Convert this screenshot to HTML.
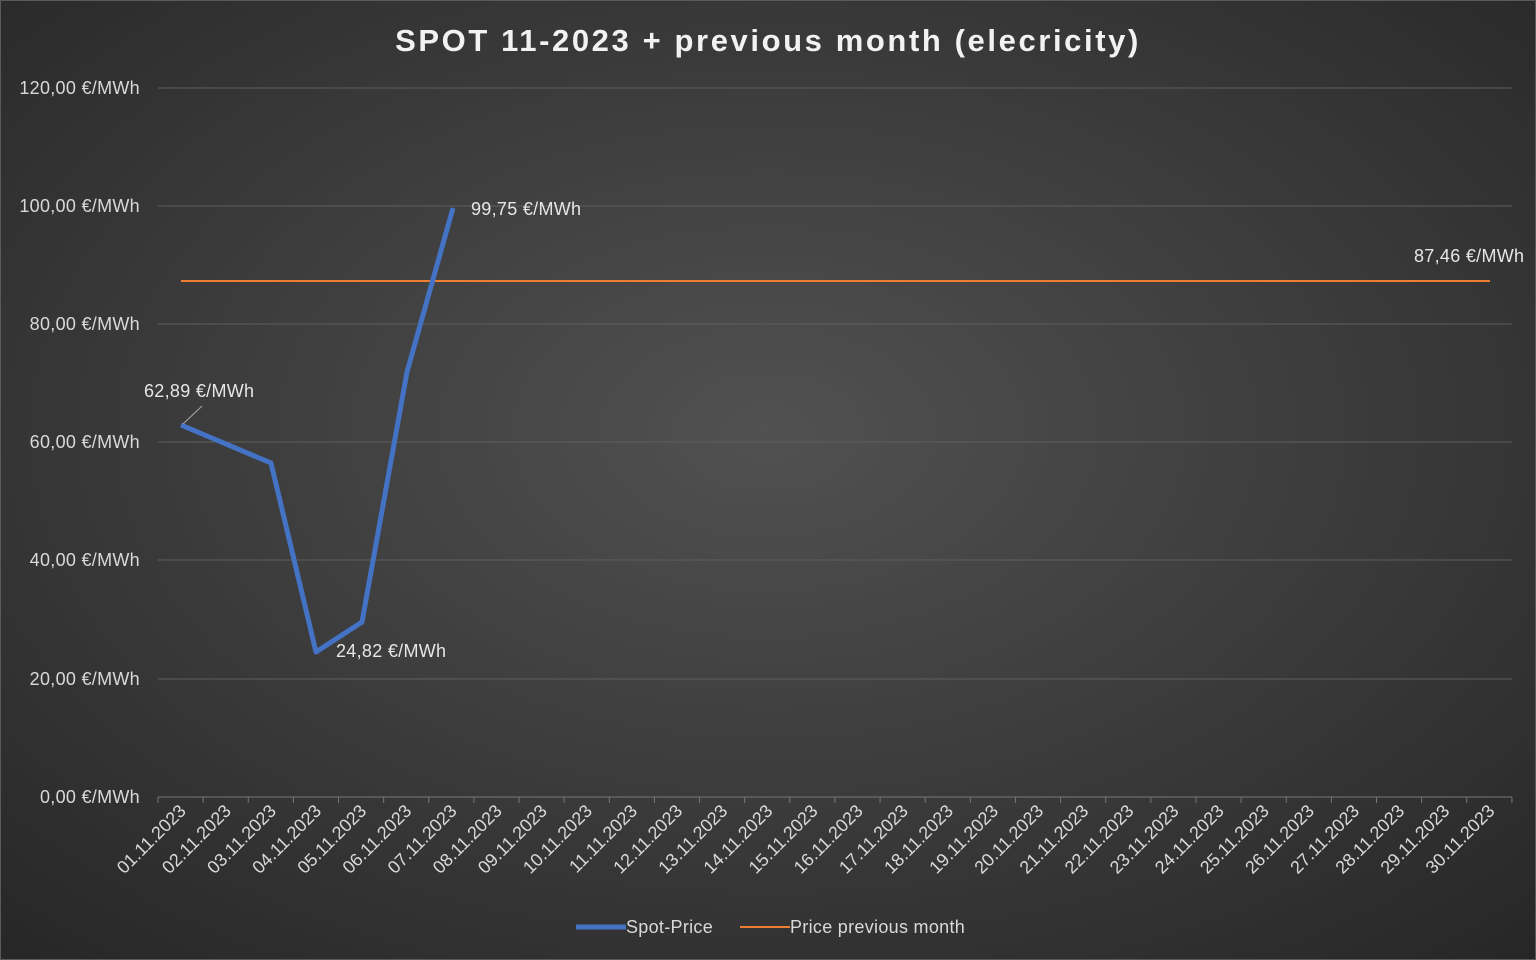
<!DOCTYPE html><html><head><style>html,body{margin:0;width:1536px;height:960px;overflow:hidden;background:#333}svg{display:block}</style></head><body>
<svg width="1536" height="960" xmlns="http://www.w3.org/2000/svg" font-family="Liberation Sans, sans-serif">
<defs><radialGradient id="g" cx="50%" cy="45%" r="75%"><stop offset="0" stop-color="#515151"/><stop offset="1" stop-color="#262626"/></radialGradient></defs>
<rect width="1536" height="960" fill="url(#g)"/>
<rect x="0.5" y="0.5" width="1535" height="959" fill="none" stroke="#5a5a5a"/>
<text x="768" y="51" text-anchor="middle" font-size="31" font-weight="bold" fill="#f2f2f2" letter-spacing="2.6">SPOT 11-2023 + previous month (elecricity)</text>
<g stroke="#5e5e5e" stroke-width="1">
<line x1="158" y1="88" x2="1512" y2="88"/><line x1="158" y1="206" x2="1512" y2="206"/><line x1="158" y1="324" x2="1512" y2="324"/><line x1="158" y1="442" x2="1512" y2="442"/><line x1="158" y1="560" x2="1512" y2="560"/><line x1="158" y1="679" x2="1512" y2="679"/>
</g>
<line x1="158" y1="797" x2="1512" y2="797" stroke="#777"/>
<g fill="#d9d9d9" font-size="18" text-anchor="end" letter-spacing="0.3">
<text x="140" y="94">120,00 €/MWh</text><text x="140" y="212">100,00 €/MWh</text><text x="140" y="330">80,00 €/MWh</text><text x="140" y="448">60,00 €/MWh</text><text x="140" y="566">40,00 €/MWh</text><text x="140" y="685">20,00 €/MWh</text><text x="140" y="803">0,00 €/MWh</text>
</g>
<g id="ticks" stroke="#777"></g>
<g id="labs" fill="#d9d9d9" font-size="18" text-anchor="end"></g>
<line x1="181" y1="281" x2="1490" y2="281" stroke="#ed7d31" stroke-width="2"/>
<polyline points="181,425 271,463 316,652 362,622 407,372 453,208" fill="none" stroke="#4472c4" stroke-width="5" stroke-linejoin="round"/>
<line x1="183" y1="424" x2="202" y2="406" stroke="#aaa" stroke-width="1"/>
<g fill="#e6e6e6" font-size="18" letter-spacing="0.3">
<text x="144" y="397">62,89 €/MWh</text><text x="336" y="657">24,82 €/MWh</text><text x="471" y="215">99,75 €/MWh</text><text x="1414" y="262">87,46 €/MWh</text>
</g>
<line x1="576" y1="927" x2="626" y2="927" stroke="#4472c4" stroke-width="5"/>
<line x1="740" y1="927" x2="790" y2="927" stroke="#ed7d31" stroke-width="2"/>
<g fill="#d9d9d9" font-size="18" letter-spacing="0.3"><text x="626" y="933">Spot-Price</text><text x="790" y="933">Price previous month</text></g>
<script>
var t=document.getElementById('ticks'),l=document.getElementById('labs'),ns='http://www.w3.org/2000/svg';
for(var i=0;i<=30;i++){var x=158+i*45.13;var e=document.createElementNS(ns,'line');e.setAttribute('x1',x);e.setAttribute('x2',x);e.setAttribute('y1',797);e.setAttribute('y2',803);t.appendChild(e);}
for(var i=0;i<30;i++){var x=181+i*45.13+6;var e=document.createElementNS(ns,'text');var d=(i+1<10?'0':'')+(i+1);e.textContent=d+'.11.2023';e.setAttribute('transform','translate('+x+',812) rotate(-45)');l.appendChild(e);}
</script>
</svg></body></html>
